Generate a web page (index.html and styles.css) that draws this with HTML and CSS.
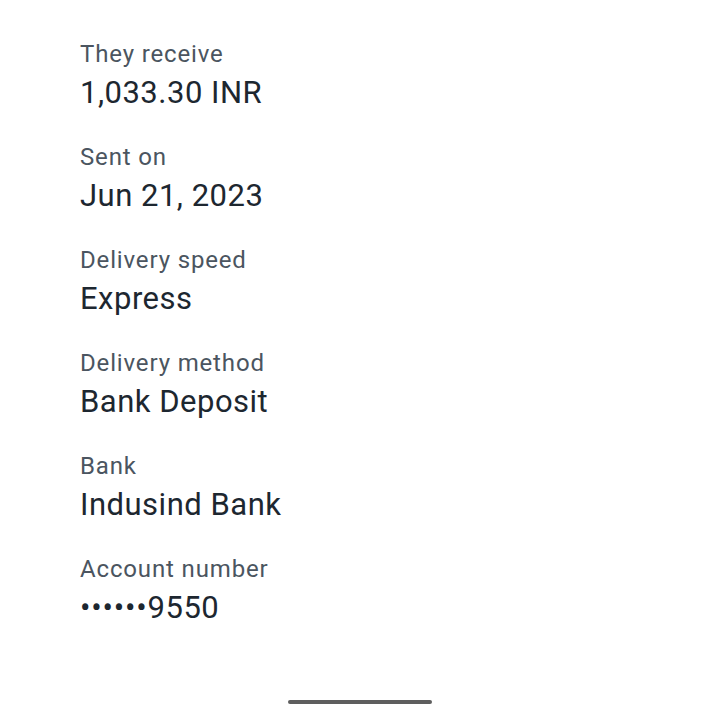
FILE: index.html
```html
<!DOCTYPE html>
<html>
<head>
<meta charset="utf-8">
<link rel="stylesheet" href="styles.css">
</head>
<body>
<div class="screen">
  <div class="details">
    <div class="item">
      <div class="label">You send</div>
      <div class="value">10.00 GBP</div>
    </div>
    <div class="item">
      <div class="label">They receive</div>
      <div class="value">1,033.30 INR</div>
    </div>
    <div class="item">
      <div class="label">Sent on</div>
      <div class="value">Jun 21, 2023</div>
    </div>
    <div class="item">
      <div class="label">Delivery speed</div>
      <div class="value">Express</div>
    </div>
    <div class="item">
      <div class="label">Delivery method</div>
      <div class="value">Bank Deposit</div>
    </div>
    <div class="item">
      <div class="label">Bank</div>
      <div class="value">Indusind Bank</div>
    </div>
    <div class="item">
      <div class="label">Account number</div>
      <div class="value"><span class="dots">••••••</span>9550</div>
    </div>
  </div>
  <div class="home-bar"></div>
</div>
</body>
</html>
```
FILE: styles.css
```css
html, body {
  margin: 0;
  padding: 0;
  background: #ffffff;
}
.screen {
  width: 720px;
  height: 716px;
  overflow: hidden;
  position: relative;
  font-family: Roboto, "Noto Sans", sans-serif;
}
.details {
  display: flex;
  flex-direction: column;
  padding-left: 80px;
  margin-top: -65px;
}
.item {
  padding-bottom: 25px;
}
.label {
  font-size: 24px;
  line-height: 32px;
  letter-spacing: 0.85px;
  color: #4b5560;
}
.value {
  font-size: 31px;
  line-height: 46px;
  letter-spacing: 0.5px;
  color: #1d2730;
}
.dots {
  letter-spacing: 0.8px;
}
.home-bar {
  position: absolute;
  left: 288px;
  top: 700px;
  width: 144px;
  height: 4px;
  border-radius: 2px;
  background: #5e5e5e;
}
```
